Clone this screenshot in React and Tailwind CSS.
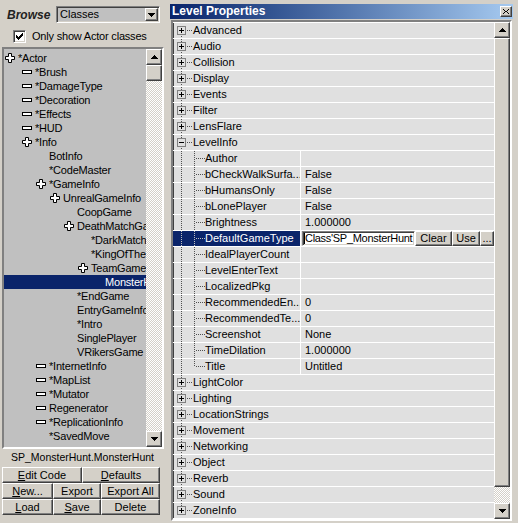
import React from "react";

const treeItems = [
  { t: "*Actor", l: 0, i: "plus" },
  { t: "*Brush", l: 1, i: "minus" },
  { t: "*DamageType", l: 1, i: "minus" },
  { t: "*Decoration", l: 1, i: "minus" },
  { t: "*Effects", l: 1, i: "minus" },
  { t: "*HUD", l: 1, i: "minus" },
  { t: "*Info", l: 1, i: "plus" },
  { t: "BotInfo", l: 2 },
  { t: "*CodeMaster", l: 2 },
  { t: "*GameInfo", l: 2, i: "plus" },
  { t: "UnrealGameInfo", l: 3, i: "plus" },
  { t: "CoopGame", l: 4 },
  { t: "DeathMatchGa", l: 4, i: "plus" },
  { t: "*DarkMatch", l: 5 },
  { t: "*KingOfTheI", l: 5 },
  { t: "TeamGame", l: 5, i: "plus" },
  { t: "MonsterH", l: 6, sel: true },
  { t: "*EndGame", l: 4 },
  { t: "EntryGameInfo", l: 4 },
  { t: "*Intro", l: 4 },
  { t: "SinglePlayer", l: 4 },
  { t: "VRikersGame", l: 4 },
  { t: "*InternetInfo", l: 2, i: "minus" },
  { t: "*MapList", l: 2, i: "minus" },
  { t: "*Mutator", l: 2, i: "minus" },
  { t: "Regenerator", l: 2, i: "minus" },
  { t: "*ReplicationInfo", l: 2, i: "minus" },
  { t: "*SavedMove", l: 2 },
];

const indent = [
  "pl-[1px]",
  "pl-[18px]",
  "pl-[32px]",
  "pl-[46px]",
  "pl-[60px]",
  "pl-[74px]",
  "pl-[88px]",
];

const cats1 = ["Advanced", "Audio", "Collision", "Display", "Events", "Filter", "LensFlare"];
const children = [
  ["Author", ""],
  ["bCheckWalkSurfa...", "False"],
  ["bHumansOnly", "False"],
  ["bLonePlayer", "False"],
  ["Brightness", "1.000000"],
  ["DefaultGameType", null],
  ["IdealPlayerCount", ""],
  ["LevelEnterText", ""],
  ["LocalizedPkg", ""],
  ["RecommendedEn...", "0"],
  ["RecommendedTe...", "0"],
  ["Screenshot", "None"],
  ["TimeDilation", "1.000000"],
  ["Title", "Untitled"],
];
const cats2 = ["LightColor", "Lighting", "LocationStrings", "Movement", "Networking", "Object", "Reverb", "Sound", "ZoneInfo"];

const raised =
  "bg-[#d4d0c8] border border-t-white border-l-white border-r-[#404040] border-b-[#404040] shadow-[inset_-1px_-1px_#808080]";
const sunken =
  "border border-t-[#808080] border-l-[#808080] border-r-white border-b-white shadow-[inset_1px_1px_#404040,inset_-1px_-1px_#d4d0c8]";

const UpArrow = () => (
  <svg width="7" height="4" viewBox="0 0 7 4" shapeRendering="crispEdges">
    <path d="M3 0h1v1h1v1h1v1h1v1H0V3h1V2h1V1h1z" fill="#000" />
  </svg>
);
const DownArrow = () => (
  <svg width="7" height="4" viewBox="0 0 7 4" shapeRendering="crispEdges">
    <path d="M0 0h7v1H6v1H5v1H4v1H3V3H2V2H1V1H0z" fill="#000" />
  </svg>
);

const PlusIcon = () => (
  <svg width="10" height="10" viewBox="0 0 10 10">
    <path d="M3.5 .5h3v3h3v3h-3v3h-3v-3h-3v-3h3z" fill="#fff" stroke="#000" strokeWidth="1" />
  </svg>
);
const MinusIcon = () => (
  <svg width="10" height="4" viewBox="0 0 10 4">
    <rect x=".5" y=".5" width="9" height="3" fill="#fff" stroke="#000" />
  </svg>
);

const DOT = "#505050";

function CatGutter({ first, last, open }) {
  return (
    <svg width="20" height="15" viewBox="0 0 20 15" shapeRendering="crispEdges" className="shrink-0">
      {!first && <line x1="8.5" y1="0" x2="8.5" y2="3" stroke={DOT} strokeDasharray="1 1" />}
      {!last && <line x1="8.5" y1="13" x2="8.5" y2="15" stroke={DOT} strokeDasharray="1 1" />}
      <rect x="4.5" y="3.5" width="8" height="8" fill="none" stroke="#808080" />
      <line x1="6" y1="7.5" x2="11" y2="7.5" stroke="#000" />
      {!open && <line x1="8.5" y1="5" x2="8.5" y2="10" stroke="#000" />}
      <line x1="14" y1="7.5" x2="20" y2="7.5" stroke={DOT} strokeDasharray="1 1" />
    </svg>
  );
}

function ChildGutter({ last, sel }) {
  const c = sel ? "#c0c0c0" : DOT;
  return (
    <svg width="32" height="15" viewBox="0 0 32 15" shapeRendering="crispEdges" className="shrink-0">
      <line x1="8.5" y1="0" x2="8.5" y2="15" stroke={c} strokeDasharray="1 1" />
      <line x1="21.5" y1="0" x2="21.5" y2={last ? 8 : 15} stroke={c} strokeDasharray="1 1" />
      <line x1="23" y1="7.5" x2="32" y2="7.5" stroke={c} strokeDasharray="1 1" />
    </svg>
  );
}

function CatRow({ name, first, last, open }) {
  return (
    <div className="h-[16px] border-t border-white flex items-center">
      <CatGutter first={first} last={last} open={open} />
      <span className="leading-[15px] whitespace-nowrap">{name}</span>
    </div>
  );
}

function ChildRow({ name, value, last }) {
  const sel = value === null;
  return (
    <div className="h-[16px] border-t border-white flex">
      <div
        className={`w-[127px] shrink-0 flex items-center overflow-hidden whitespace-nowrap ${
          sel ? "bg-[#0a246a] text-white" : ""
        }`}
      >
        <ChildGutter last={last} sel={sel} />
        <span className="leading-[15px]">{name}</span>
      </div>
      <div className="w-px bg-white shrink-0" />
      {sel ? (
        <div className="flex-1 flex">
          <div className={`ml-[1px] w-[113px] h-[15px] bg-white ${sunken} flex items-center overflow-hidden whitespace-nowrap`}>
            <span className="w-px h-[11px] bg-black ml-[1px] shrink-0" />
            <span className="leading-[13px] tracking-[-0.3px]">Class'SP_MonsterHunt</span>
          </div>
          <div className={`w-[37px] h-[15px] ${raised} flex items-center justify-center`}>Clear</div>
          <div className={`w-[28px] h-[15px] ${raised} flex items-center justify-center`}>Use</div>
          <div className={`w-[14px] h-[15px] ${raised} flex items-center justify-center`}>...</div>
        </div>
      ) : (
        <div className="flex-1 flex items-center pl-[4px] leading-[15px] whitespace-nowrap">{value}</div>
      )}
    </div>
  );
}

function Btn({ w, children }) {
  return <div className={`${w} h-[16px] ${raised} flex items-center justify-center whitespace-nowrap`}>{children}</div>;
}

export default function App() {
  return (
    <div className="w-[518px] h-[523px] flex bg-[#d4d0c8] overflow-hidden text-[11px] text-black font-['Liberation_Sans',Arial,sans-serif]">
      {/* Left panel */}
      <div className="w-[165px] shrink-0 flex flex-col">
        <div className="h-[25px] flex items-start pt-[6px] pl-[7px]">
          <span className="w-[49px] h-[17px] flex items-center font-bold italic text-[12px] text-[#222]">Browse</span>
          <div className={`w-[104px] h-[17px] bg-[#c0c0c0] ${sunken} flex items-center justify-between`}>
            <span className="pl-[3px] leading-[13px]">Classes</span>
            <div className={`w-[13px] h-[13px] mr-[1px] ${raised} flex items-center justify-center`}>
              <DownArrow />
            </div>
          </div>
        </div>
        <div className="h-[22px] flex items-center pl-[13px]">
          <div className={`w-[13px] h-[13px] bg-white ${sunken} flex items-center justify-center`}>
            <svg width="7" height="7" viewBox="0 0 7 7" shapeRendering="crispEdges">
              <path d="M0 2h1v1h1v1h1V3h1V2h1V1h1V0h1v3H6v1H5v1H4v1H3v1H2V6H1V5H0z" fill="#000" />
            </svg>
          </div>
          <span className="ml-[6px] whitespace-nowrap tracking-[-0.2px]">Only show Actor classes</span>
        </div>
        <div className={`ml-[2px] w-[162px] h-[402px] bg-[#c0c0c0] border-2 border-t-[#808080] border-l-[#808080] border-r-white border-b-white flex`}>
          <div className="w-[142px] h-full overflow-hidden pt-[2px]">
            {treeItems.map((it, k) => (
              <div
                key={k}
                className={`h-[14px] flex items-center whitespace-nowrap ${it.sel ? "bg-[#0a246a] text-white" : ""}`}
              >
                <div className={`${indent[it.l]} flex items-center shrink-0`}>
                  <div className="w-[13px] h-[14px] flex items-center shrink-0">
                    {it.i === "plus" ? <PlusIcon /> : it.i === "minus" ? <MinusIcon /> : null}
                  </div>
                  <span className="leading-[14px] tracking-[-0.2px]">{it.t}</span>
                </div>
              </div>
            ))}
          </div>
          <div className="w-[16px] h-full flex flex-col">
            <div className={`h-[16px] ${raised} flex items-center justify-center`}>
              <UpArrow />
            </div>
            <div className={`h-[16px] ${raised}`} />
            <div className="flex-1 bg-[image:repeating-conic-gradient(#ffffff_0%_25%,#d4d0c8_0%_50%)] bg-[length:2px_2px]" />
            <div className={`h-[16px] ${raised} flex items-center justify-center`}>
              <DownArrow />
            </div>
          </div>
        </div>
        <div className="h-[18px] flex items-center justify-center whitespace-nowrap text-[10.5px]">SP_MonsterHunt.MonsterHunt</div>
        <div className="pl-[2px] flex flex-col">
          <div className="flex">
            <Btn w="w-[80px]">
              <span><u>E</u>dit Code</span>
            </Btn>
            <Btn w="w-[78px]">
              <span><u>D</u>efaults</span>
            </Btn>
          </div>
          <div className="flex">
            <Btn w="w-[51px]">
              <span><u>N</u>ew...</span>
            </Btn>
            <Btn w="w-[48px]">Export</Btn>
            <Btn w="w-[59px]">Export All</Btn>
          </div>
          <div className="flex">
            <Btn w="w-[51px]">
              <span><u>L</u>oad</span>
            </Btn>
            <Btn w="w-[48px]">
              <span><u>S</u>ave</span>
            </Btn>
            <Btn w="w-[59px]">Delete</Btn>
          </div>
        </div>
      </div>

      {/* Right panel */}
      <div className="flex-1 flex flex-col pl-[5px]">
        <div className="mt-[4px] w-[343px] h-[15px] bg-gradient-to-r from-[#0a246a] to-[#a6caf0] flex items-center justify-between">
          <span className="pl-[2px] text-white font-bold text-[12px] leading-[15px] whitespace-nowrap">Level Properties</span>
          <div className={`w-[12px] h-[11px] mr-[1px] ${raised} flex items-center justify-center`}>
            <svg width="6" height="5" viewBox="0 0 6 5" shapeRendering="crispEdges">
              <path d="M0 0h1v1h1v1h2V1h1V0h1v1H5v1H4v1h1v1h1v1H5V4H4V3H2v1H1v1H0V4h1V3h1V2H1V1H0z" fill="#000" />
            </svg>
          </div>
        </div>
        <div className="mt-[1px] ml-[1px] w-[341px] h-[501px] bg-[#e0e0e0] border-2 border-t-[#808080] border-l-[#808080] border-r-white border-b-white shadow-[inset_1px_1px_#404040] flex">
          <div className="w-[321px] flex flex-col border-b border-white self-start">
            {cats1.map((c, k) => (
              <CatRow key={c} name={c} first={k === 0} />
            ))}
            <CatRow name="LevelInfo" open />
            {children.map(([n, v], k) => (
              <ChildRow key={n} name={n} value={v} last={k === children.length - 1} />
            ))}
            {cats2.map((c, k) => (
              <CatRow key={c} name={c} last={k === cats2.length - 1} />
            ))}
          </div>
          <div className="w-[16px] h-[497px] flex flex-col">
            <div className={`h-[16px] ${raised} flex items-center justify-center`}>
              <UpArrow />
            </div>
            <div className={`h-[449px] ${raised}`} />
            <div className="flex-1 bg-[image:repeating-conic-gradient(#ffffff_0%_25%,#d4d0c8_0%_50%)] bg-[length:2px_2px]" />
            <div className={`h-[16px] ${raised} flex items-center justify-center`}>
              <DownArrow />
            </div>
          </div>
        </div>
      </div>
    </div>
  );
}
